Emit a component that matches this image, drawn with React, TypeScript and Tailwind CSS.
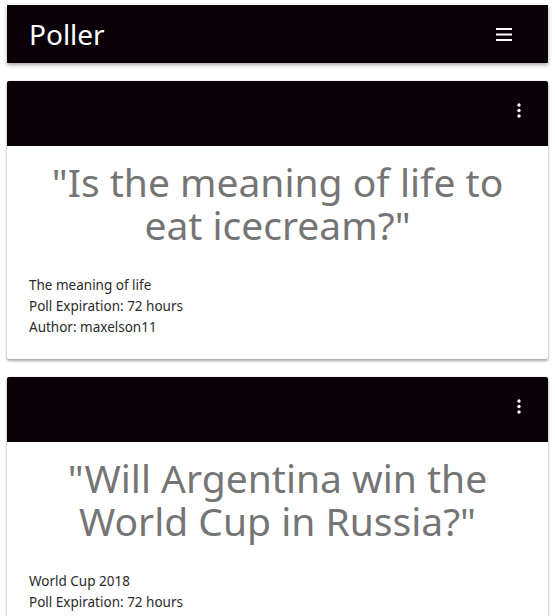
const polls = [
  {
    question: "Is the meaning of life to eat icecream?",
    topic: "The meaning of life",
    expiration: "72 hours",
    author: "maxelson11",
  },
  {
    question: "Will Argentina win the World Cup in Russia?",
    topic: "World Cup 2018",
    expiration: "72 hours",
    author: "mariaf",
  },
];

const MenuIcon = () => (
  <svg width="16" height="13" viewBox="0 0 16 13" fill="none">
    <rect x="0" y="0" width="16" height="2" fill="white" />
    <rect x="0" y="5.5" width="16" height="2" fill="white" />
    <rect x="0" y="11" width="16" height="2" fill="white" />
  </svg>
);

const MoreIcon = () => (
  <svg width="4" height="15" viewBox="0 0 4 15" fill="white">
    <circle cx="2" cy="2" r="1.7" />
    <circle cx="2" cy="7.5" r="1.7" />
    <circle cx="2" cy="13" r="1.7" />
  </svg>
);

const PollCard = ({ poll }: { poll: (typeof polls)[number] }) => (
  <div className="bg-white rounded-[2px] shadow-[0_2px_3px_rgba(0,0,0,0.35),0_0_2px_rgba(0,0,0,0.12)] overflow-hidden">
    <div className="h-[65px] bg-[#0b0008] flex items-start justify-end pt-[22px] pr-[27px]">
      <MoreIcon />
    </div>
    <div className="px-[22px] pt-[14px] pb-[21px]">
      <h2 className="text-center text-[#757575] text-[39px] leading-[43px] px-[16px]">
        "{poll.question}"
      </h2>
      <div className="mt-[29px] text-[13.5px] leading-[21px] text-[#2a2a2a]">
        <p>{poll.topic}</p>
        <p>Poll Expiration: {poll.expiration}</p>
        <p>Author: {poll.author}</p>
      </div>
    </div>
  </div>
);

export default function App() {
  return (
    <div className="min-h-screen bg-white px-[7px] pt-[5px] pb-6 font-['Noto_Sans',sans-serif]">
      <nav className="h-[58px] bg-[#0b0008] flex items-center justify-between pl-[22px] pr-[36px] shadow-[0_2px_4px_rgba(0,0,0,0.35)]">
        <span className="text-white text-[28px]">Poller</span>
        <MenuIcon />
      </nav>
      <div className="mt-[18px] flex flex-col gap-[18px]">
        {polls.map((p) => (
          <PollCard key={p.question} poll={p} />
        ))}
      </div>
    </div>
  );
}
